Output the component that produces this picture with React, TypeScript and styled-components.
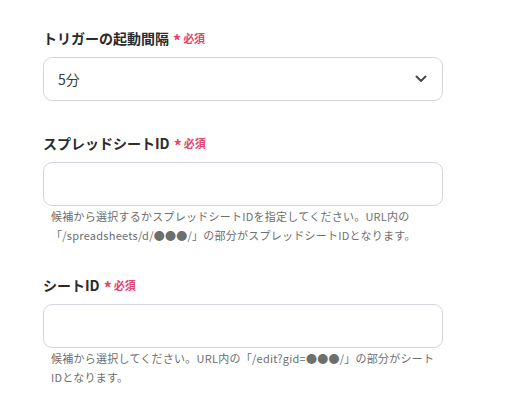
import React from "react";
import styled, { createGlobalStyle } from "styled-components";

const GlobalStyle = createGlobalStyle`
  body {
    margin: 0;
    background: #ffffff;
    font-family: "Noto Sans CJK JP", "Noto Sans", sans-serif;
    color: #2b2b2b;
  }
`;

const Form = styled.div`
  display: flex;
  flex-direction: column;
  width: 400px;
  padding: 28px 0 0 43px;
`;

const Field = styled.div<{ $gap?: number }>`
  display: flex;
  flex-direction: column;
  margin-bottom: ${(p) => p.$gap ?? 30}px;
`;

const Label = styled.div`
  display: flex;
  align-items: center;
  gap: 4px;
  height: 20px;
  font-size: 14px;
  font-weight: 700;
  color: #2b2b2b;
  margin-bottom: 9px;
`;

const Required = styled.span`
  display: inline-flex;
  align-items: center;
  gap: 2px;
  font-size: 11px;
  font-weight: 700;
  color: #e5446d;
`;

const Star = styled.span`
  font-size: 16px;
  line-height: 1;
  margin-top: 4px;
`;

const Box = styled.div`
  box-sizing: border-box;
  height: 44px;
  width: 400px;
  border: 1px solid #d3d6de;
  border-radius: 9px;
  background: #fff;
  display: flex;
  align-items: center;
  justify-content: space-between;
  padding: 0 15px 0 14px;
  font-size: 14px;
  color: #3a3a3a;
`;

const Help = styled.div`
  margin-top: 1px;
  padding-left: 8px;
  font-size: 11px;
  line-height: 19px;
  letter-spacing: 0.25px;
  color: #6e6e6e;
`;

function Chevron() {
  return (
    <svg width="12" height="8" viewBox="0 0 12 8">
      <path d="M1.5 1.5 L6 6 L10.5 1.5" fill="none" stroke="#4a4a4a" strokeWidth="2" strokeLinecap="round" strokeLinejoin="round" />
    </svg>
  );
}

function RequiredMark() {
  return (
    <Required>
      <Star>*</Star>必須
    </Required>
  );
}

export default function App() {
  return (
    <>
      <GlobalStyle />
      <Form>
        <Field $gap={32}>
          <Label>
            トリガーの起動間隔
            <RequiredMark />
          </Label>
          <Box>
            5分
            <Chevron />
          </Box>
        </Field>
        <Field>
          <Label>
            スプレッドシートID
            <RequiredMark />
          </Label>
          <Box />
          <Help>
            候補から選択するかスプレッドシートIDを指定してください。URL内の
            <br />
            「/spreadsheets/d/●●●/」の部分がスプレッドシートIDとなります。
          </Help>
        </Field>
        <Field>
          <Label>
            シートID
            <RequiredMark />
          </Label>
          <Box />
          <Help>
            候補から選択してください。URL内の「/edit?gid=●●●/」の部分がシート
            <br />
            IDとなります。
          </Help>
        </Field>
      </Form>
    </>
  );
}
